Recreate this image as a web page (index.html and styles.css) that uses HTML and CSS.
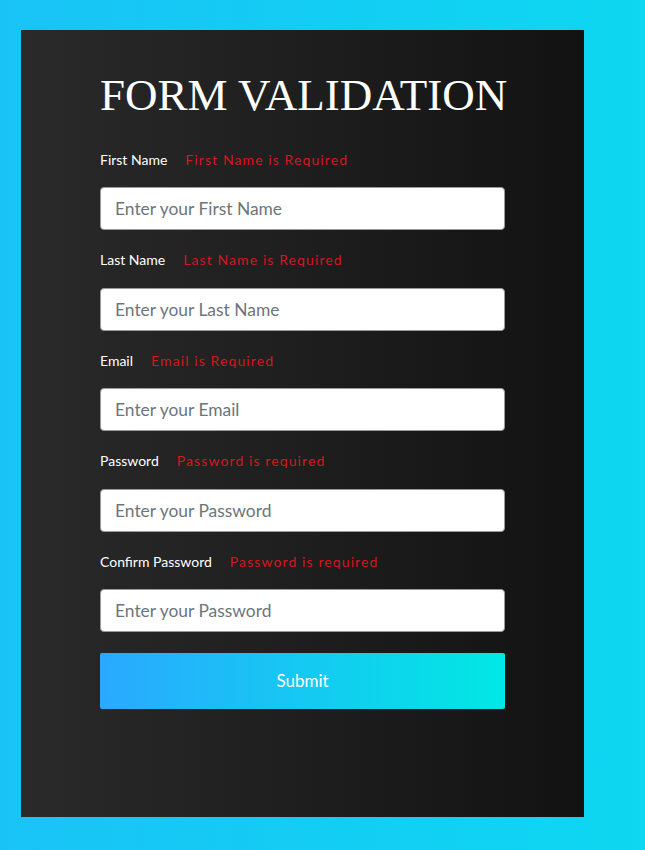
FILE: index.html
```html
<!DOCTYPE html>
<html lang="en">
<head>
<meta charset="utf-8">
<title>Form Validation</title>
<link rel="stylesheet" href="styles.css">
</head>
<body>
<div class="page">
  <div class="card">
    <h1 class="title">FORM VALIDATION</h1>
    <form class="form">
      <div class="field">
        <div class="label-row"><label class="label">First Name</label><span class="error">First Name is Required</span></div>
        <input class="input" type="text" placeholder="Enter your First Name">
      </div>
      <div class="field">
        <div class="label-row"><label class="label">Last Name</label><span class="error">Last Name is Required</span></div>
        <input class="input" type="text" placeholder="Enter your Last Name">
      </div>
      <div class="field">
        <div class="label-row"><label class="label">Email</label><span class="error">Email is Required</span></div>
        <input class="input" type="text" placeholder="Enter your Email">
      </div>
      <div class="field">
        <div class="label-row"><label class="label">Password</label><span class="error">Password is required</span></div>
        <input class="input" type="password" placeholder="Enter your Password">
      </div>
      <div class="field">
        <div class="label-row"><label class="label">Confirm Password</label><span class="error">Password is required</span></div>
        <input class="input" type="password" placeholder="Enter your Password">
      </div>
      <button class="submit" type="button">Submit</button>
    </form>
  </div>
</div>
</body>
</html>
```
FILE: styles.css
```css
* { box-sizing: border-box; }
html, body { margin: 0; height: 100%; }
body {
  background: linear-gradient(to right, #19c3f6, #0dd7f1);
  font-family: "Lato", "Noto Sans", sans-serif;
}
.page {
  padding: 30px 0 0 21px;
}
.card {
  width: 563px;
  height: 787px;
  background: linear-gradient(to right, #2a2a2a, #121212);
  padding: 40px 79px 0 79px;
}
.title {
  margin: 0;
  font-family: "Liberation Serif", "Times New Roman", serif;
  font-weight: normal;
  font-size: 45px;
  line-height: 50px;
  color: #ffffff;
  white-space: nowrap;
}
.form {
  margin-top: 30px;
  display: flex;
  flex-direction: column;
  gap: 20.5px;
}
.field {
  display: flex;
  flex-direction: column;
  gap: 19px;
}
.label-row {
  display: flex;
  gap: 18px;
  height: 18px;
  align-items: center;
  font-size: 14px;
}
.label { color: #ffffff; }
.error {
  color: #d4161f;
  letter-spacing: 1.1px;
}
.input {
  width: 405px;
  height: 43px;
  border: 1px solid #9a9a9a;
  border-radius: 4px;
  background: #ffffff;
  padding: 0 14px;
  font-family: inherit;
  font-size: 17.4px;
  color: #495057;
  outline: none;
}
.input::placeholder { color: #6c757d; }
.submit {
  width: 405px;
  height: 56px;
  border: none;
  border-radius: 2px;
  background: linear-gradient(to right, #2aa9ff, #00e8e4);
  color: #ffffff;
  font-family: inherit;
  font-size: 17px;
  cursor: pointer;
}
```
